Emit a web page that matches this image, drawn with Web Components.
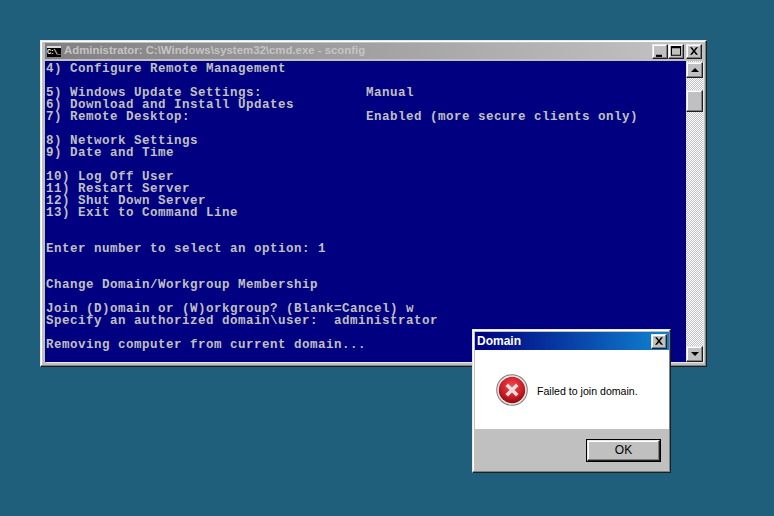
<!DOCTYPE html>
<html>
<head>
<meta charset="utf-8">
<title>sconfig</title>
<style>
  html, body { margin: 0; height: 100%; }
  body { background: #1f5f7c; overflow: hidden; }
</style>
</head>
<body>
<win-desktop>
  <cmd-window title-text="Administrator: C:\Windows\system32\cmd.exe - sconfig">4) Configure Remote Management

5) Windows Update Settings:             Manual
6) Download and Install Updates
7) Remote Desktop:                      Enabled (more secure clients only)

8) Network Settings
9) Date and Time

10) Log Off User
11) Restart Server
12) Shut Down Server
13) Exit to Command Line


Enter number to select an option: 1


Change Domain/Workgroup Membership

Join (D)omain or (W)orkgroup? (Blank=Cancel) w
Specify an authorized domain\user:  administrator

Removing computer from current domain...</cmd-window>
  <message-box title-text="Domain" message="Failed to join domain."></message-box>
</win-desktop>

<script>
const BEVEL = `
  border: 1px solid;
  border-color: #e8e8e8 #202020 #202020 #e8e8e8;
  box-shadow: inset -1px -1px 0 #808080, inset 1px 1px 0 #fff;
`;

class WinDesktop extends HTMLElement {
  constructor() {
    super();
    this.attachShadow({ mode: 'open' });
    this.shadowRoot.innerHTML = `
      <style>
        :host { display: block; position: relative; width: 774px; height: 516px; box-sizing: border-box; padding: 40px 0 0 40px; }
      </style>
      <slot></slot>
    `;
  }
}

class CaptionButton extends HTMLElement {
  constructor() {
    super();
    this.attachShadow({ mode: 'open' });
    const glyphs = {
      min: '<path d="M3 9h6v2H3z"/>',
      max: '<path d="M2 1h10v9H2zM3 3v6h8V3z" fill-rule="evenodd"/>',
      close: '<path d="M3 2h2l2 2.500L9 2h2L8 5.500 11 9H9L7 6.800 5 9H3l3-3.500z"/>'
    };
    this.shadowRoot.innerHTML = `
      <style>
        :host { display: block; width: 16px; height: 15px; box-sizing: border-box; background: #c0c0c0; ${BEVEL} }
        svg { display: block; width: 14px; height: 13px; }
      </style>
      <svg viewBox="0 0 14 12" preserveAspectRatio="none" fill="#000">${glyphs[this.getAttribute('kind')]}</svg>
    `;
  }
}

class ScrollBar extends HTMLElement {
  constructor() {
    super();
    this.attachShadow({ mode: 'open' });
    this.shadowRoot.innerHTML = `
      <style>
        :host {
          display: flex; flex-direction: column; width: 17px; box-sizing: border-box; padding-top: 1px;
          background-color: #c0c0c0;
          background-image: conic-gradient(#fff 25%, #c0c0c0 0 50%, #fff 0 75%, #c0c0c0 0);
          background-size: 2px 2px;
        }
        .btn { height: 16px; box-sizing: border-box; background: #c0c0c0; display: flex; align-items: center; justify-content: center; ${BEVEL} }
        .tri { width: 0; height: 0; border: 4px solid transparent; border-top: 0; border-bottom: 4px solid #000; }
        .down .tri { border-top: 4px solid #000; border-bottom: 0; }
        .gap1 { height: 12px; }
        .thumb { height: 22px; box-sizing: border-box; background: #c0c0c0; ${BEVEL} }
        .rest { flex: 1; }
      </style>
      <div class="btn"><div class="tri"></div></div>
      <div class="gap1"></div>
      <div class="thumb"></div>
      <div class="rest"></div>
      <div class="btn down"><div class="tri"></div></div>
    `;
  }
}

class CmdWindow extends HTMLElement {
  constructor() {
    super();
    this.attachShadow({ mode: 'open' });
  }

  connectedCallback() {
    this.shadowRoot.innerHTML = `
      <style>
        :host {
          display: block; width: 667px; height: 327px; box-sizing: border-box;
          background: #c0c0c0; padding: 2px 3px 4px 4px; ${BEVEL}
        }
        .title {
          height: 16px; display: flex; align-items: center; gap: 3px; padding: 0 1px 0 2px;
          background: linear-gradient(90deg, #808080, #c4c4c4);
          font: bold 11.4px "Liberation Sans", sans-serif; color: #c4c4c4;
        }
        .icon {
          width: 14px; height: 11px; flex: none; box-sizing: border-box; background: #000;
          border-top: 2px solid #dcdcdc; color: #fff;
          font: bold 7px/9px "Liberation Mono", monospace; letter-spacing: -1px; overflow: hidden;
        }
        .text { flex: 1; white-space: pre; overflow: hidden; margin-bottom: 2px; }
        .buttons { display: flex; }
        .buttons caption-button:last-child { margin-left: 2px; }
        .body { display: flex; height: 301px; margin-top: 2px; box-shadow: 1px 1px 0 #e8e8e8; }
        .screen {
          flex: none; width: 641px; box-sizing: border-box; padding: 2px 0 0 1px;
          background: #000080; color: #c0c0c0;
          font: bold 12.5px/12px "Liberation Mono", monospace; letter-spacing: 0.5px;
        }
        .screen div { width: fit-content; min-height: 12px; white-space: pre; }
      </style>
      <div class="title">
        <div class="icon">C:\\_</div>
        <div class="text">${this.getAttribute('title-text')}</div>
        <div class="buttons">
          <caption-button kind="min"></caption-button>
          <caption-button kind="max"></caption-button>
          <caption-button kind="close"></caption-button>
        </div>
      </div>
      <div class="body">
        <div class="screen"></div>
        <scroll-bar></scroll-bar>
      </div>
    `;
    // consecutive lines stay one block, a blank line is an empty 12px row
    const screen = this.shadowRoot.querySelector('.screen');
    let block = null;
    for (const line of this.textContent.split('\n')) {
      if (!line) {
        screen.appendChild(document.createElement('div'));
        block = null;
      } else if (block) {
        block.textContent += '\n' + line;
      } else {
        block = document.createElement('div');
        block.textContent = line;
        screen.appendChild(block);
      }
    }
  }
}

class ErrorIcon extends HTMLElement {
  constructor() {
    super();
    this.attachShadow({ mode: 'open' });
    this.shadowRoot.innerHTML = `
      <style>
        :host { display: block; width: 32px; height: 32px; flex: none; }
        svg { display: block; }
      </style>
      <svg width="32" height="32" viewBox="0 0 32 32">
        <defs>
          <radialGradient id="red" cx="50%" cy="35%" r="65%">
            <stop offset="0" stop-color="#f04850"/>
            <stop offset="0.65" stop-color="#cc1c24"/>
            <stop offset="1" stop-color="#90080e"/>
          </radialGradient>
        </defs>
        <circle cx="16" cy="16" r="15.800" fill="#7c7c7c"/>
        <circle cx="16" cy="16" r="14.800" fill="#e6e6e6"/>
        <circle cx="16" cy="16" r="13.200" fill="url(#red)"/>
        <path d="M9.500 12l2.500-2.500 4 4 4-4 2.500 2.500-4 4 4 4-2.500 2.500-4-4-4 4-2.500-2.500 4-4z" fill="#e8e0e0"/>
      </svg>
    `;
  }
}

class PushButton extends HTMLElement {
  constructor() {
    super();
    this.attachShadow({ mode: 'open' });
    this.shadowRoot.innerHTML = `
      <style>
        :host {
          display: block; width: 75px; height: 23px; box-sizing: border-box;
          border: 1px solid #000; background: #c0c0c0;
          font: 12px/19px "Liberation Sans", sans-serif; color: #000;
        }
        div { height: 100%; box-sizing: border-box; text-align: center; ${BEVEL} }
      </style>
      <div><slot></slot></div>
    `;
  }
}

class MessageBox extends HTMLElement {
  constructor() {
    super();
    this.attachShadow({ mode: 'open' });
    this.shadowRoot.innerHTML = `
      <style>
        :host {
          position: absolute; left: 472px; top: 329px;
          display: flex; flex-direction: column; width: 199px; height: 144px; box-sizing: border-box;
          background: #c0c0c0; padding: 2px 1px 2px 2px; ${BEVEL}
        }
        .title {
          height: 18px; flex: none; display: flex; align-items: center; justify-content: space-between; padding: 0 2px 0 2px;
          background: linear-gradient(90deg, #000080, #1084d0);
          font: bold 12px "Liberation Sans", sans-serif; color: #fff;
        }
        .content {
          height: 79px; flex: none; background: #fff; display: flex; align-items: center; gap: 9px; padding: 0 0 0 21px;
          box-sizing: border-box;
          font: 10.6px "Liberation Sans", sans-serif; color: #000;
        }
        .content span { margin-top: 2px; }
        .foot { flex: 1; display: flex; justify-content: flex-end; align-items: flex-start; padding: 10px 8px 0 0; }
      </style>
      <div class="title"><span>${this.getAttribute('title-text')}</span><caption-button kind="close"></caption-button></div>
      <div class="content"><error-icon></error-icon><span>${this.getAttribute('message')}</span></div>
      <div class="foot"><push-button>OK</push-button></div>
    `;
  }
}

customElements.define('win-desktop', WinDesktop);
customElements.define('caption-button', CaptionButton);
customElements.define('scroll-bar', ScrollBar);
customElements.define('error-icon', ErrorIcon);
customElements.define('push-button', PushButton);
customElements.define('cmd-window', CmdWindow);
customElements.define('message-box', MessageBox);
</script>
</body>
</html>
